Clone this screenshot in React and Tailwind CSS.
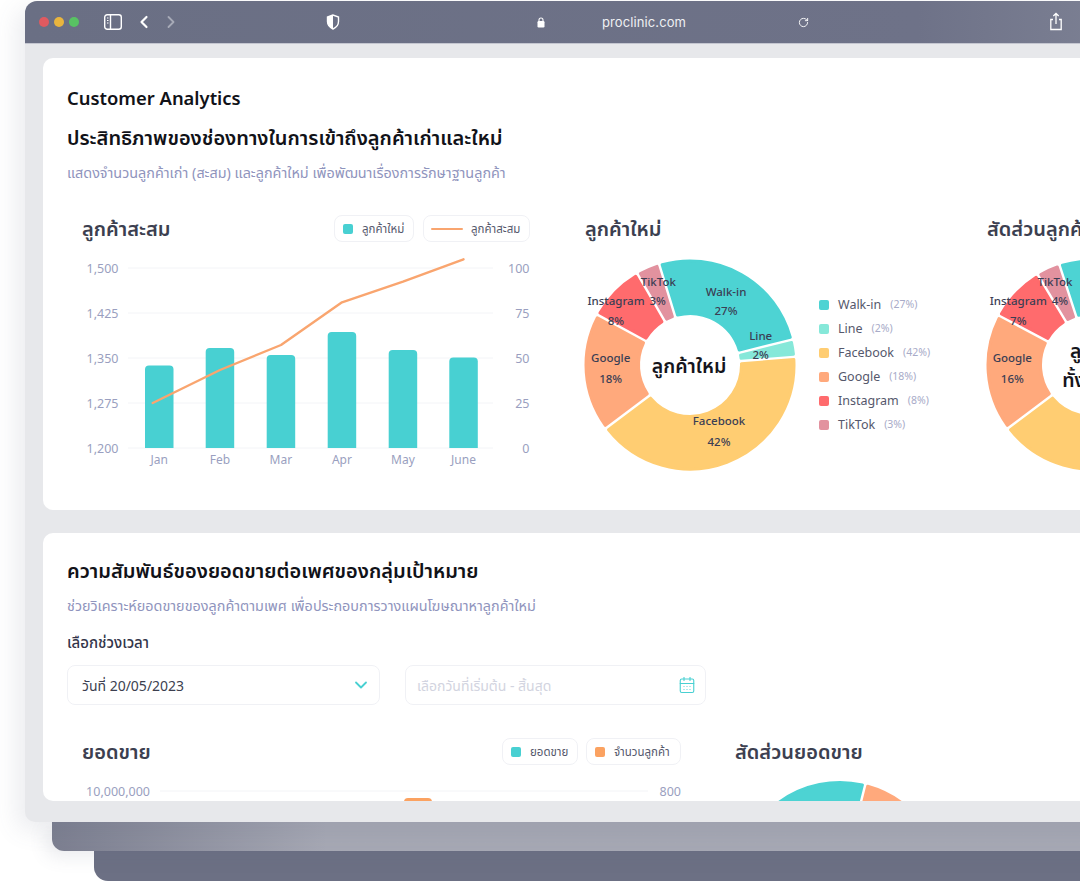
import React from "react";
import { ChevronLeft, ChevronRight, ChevronDown, RotateCw, CalendarDays } from "lucide-react";

const C = { teal: "#4dd3d3", mint: "#86e8d9", yellow: "#ffcd72", orange: "#ffa97c", red: "#ff6b6d", pink: "#e2929f" };

function pt(cx, cy, r, deg) {
  const a = ((deg - 90) * Math.PI) / 180;
  return [cx + r * Math.cos(a), cy + r * Math.sin(a)];
}

function slice(cx, cy, R, r, a0, a1) {
  const ro = R - 1.5, ri = r + 1.5, inset = 2.7;
  const dO = (inset / ro) * (180 / Math.PI), dI = (inset / ri) * (180 / Math.PI);
  const p1 = pt(cx, cy, ro, a0 + dO), p2 = pt(cx, cy, ro, a1 - dO);
  const p3 = pt(cx, cy, ri, a1 - dI), p4 = pt(cx, cy, ri, a0 + dI);
  const lo = a1 - a0 - 2 * dO > 180 ? 1 : 0, li = a1 - a0 - 2 * dI > 180 ? 1 : 0;
  return `M${p1[0]} ${p1[1]}A${ro} ${ro} 0 ${lo} 1 ${p2[0]} ${p2[1]}L${p3[0]} ${p3[1]}A${ri} ${ri} 0 ${li} 0 ${p4[0]} ${p4[1]}Z`;
}

function Donut({ slices, labels, center, width = 212, height = 212, cx = 106, cy = 106, R = 105.5, r = 50 }) {
  return (
    <svg width={width} height={height} className="block shrink-0 overflow-visible">
      {slices.map(([a0, a1, c], i) => (
        <path key={i} d={slice(cx, cy, R, r, a0, a1)} fill={c} stroke={c} strokeWidth="3" strokeLinejoin="round" />
      ))}
      {labels &&
        labels.map(([t, x, y], i) => (
          <text key={i} x={x} y={y} textAnchor="middle" dominantBaseline="central" fontSize="11.5" fontWeight="500" fill="#3b3e54">
            {t}
          </text>
        ))}
      {center &&
        center.map(([t, x, y], i) => (
          <text key={i} x={x} y={y} textAnchor="middle" dominantBaseline="central" fontSize="19.5" fontWeight="600" fill="#14151c">
            {t}
          </text>
        ))}
    </svg>
  );
}

function Pill({ children, className }) {
  return (
    <div className={"flex h-[27px] items-center rounded-[8px] border border-[#f0f1f5] bg-white text-[11.5px] text-[#55586c] " + className}>
      {children}
    </div>
  );
}

function Swatch({ color, className }) {
  return <span className={"block h-[10px] w-[10px] shrink-0 rounded-[2px] " + (className || "")} style={{ backgroundColor: color }} />;
}

function SectionTitle({ children }) {
  return <h3 className="text-[20px] leading-[27px] font-semibold whitespace-nowrap text-[#3c3f50]">{children}</h3>;
}

function BarChart() {
  const ys = [[1500, 100, 17], [1425, 75, 62], [1350, 50, 107], [1275, 25, 152], [1200, 0, 197]];
  const bars = [
    ["Jan", 78, 114.5], ["Feb", 138.7, 97], ["Mar", 199.7, 104], ["Apr", 260.7, 81], ["May", 321.7, 99], ["June", 382.3, 106.5],
  ];
  return (
    <svg width="463" height="225" className="block">
      {ys.map(([l, r, y]) => (
        <g key={l}>
          <line x1="61" x2="426" y1={y} y2={y} stroke="#f3f4f7" />
          <text x="51.5" y={y} textAnchor="end" dominantBaseline="central" fontSize="12.5" fill="#9a9fc0">{l.toLocaleString("en-US")}</text>
          <text x="462.5" y={y} textAnchor="end" dominantBaseline="central" fontSize="12.5" fill="#9a9fc0">{r}</text>
        </g>
      ))}
      {bars.map(([m, x, top]) => (
        <g key={m}>
          <path d={`M${x} 197V${top + 4}a4 4 0 0 1 4-4h20.5a4 4 0 0 1 4 4V197Z`} fill="#48d0d2" />
          <text x={x + 14.2} y="208" textAnchor="middle" dominantBaseline="central" fontSize="12" fill="#9a9fc0">{m}</text>
        </g>
      ))}
      <polyline points="85.7,152 153,119 214,94 275,51.3 336,30.7 396.5,8.3" fill="none" stroke="#f9a56f" strokeWidth="2.4" strokeLinecap="round" strokeLinejoin="round" />
    </svg>
  );
}

const legend = [
  ["Walk-in", "(27%)", C.teal],
  ["Line", "(2%)", C.mint],
  ["Facebook", "(42%)", C.yellow],
  ["Google", "(18%)", C.orange],
  ["Instagram", "(8%)", C.red],
  ["TikTok", "(3%)", C.pink],
];

const slices1 = [
  [-17, 76, C.teal], [76, 85.5, C.mint], [85.5, 233, C.yellow], [233, 298.5, C.orange], [298.5, 330, C.red], [330, 343, C.pink],
];
const labels1 = [
  ["Walk-in", 142, 32.5], ["27%", 142, 51.5], ["Line", 176.7, 76.5], ["2%", 176.7, 95.5], ["Facebook", 135, 161.5], ["42%", 135, 182],
  ["Google", 26.7, 98.5], ["18%", 26.7, 119.5], ["Instagram", 32, 41], ["8%", 32, 61.5], ["TikTok", 74.3, 22.5], ["3%", 73.7, 41.5],
];
const slices2 = [
  [-18, 76, C.teal], [76, 88, C.mint], [88, 233, C.yellow], [233, 298, C.orange], [298, 329, C.red], [329, 342, C.pink],
];
const labels2 = [
  ["Google", 26.3, 98.5], ["16%", 26.3, 119.5], ["Instagram", 32.3, 41], ["7%", 32.3, 61.5], ["TikTok", 69, 22.5], ["4%", 74, 41.5],
];

export default function App() {
  return (
    <div className="h-[881px] w-[1080px] overflow-hidden bg-white font-['Noto_Sans','Noto_Sans_Thai',Inter,sans-serif]">
      <div className="w-[1300px] pt-[1px] pl-[25px]">
        <div className="relative z-20 flex h-[821px] flex-col overflow-hidden rounded-t-[12px] rounded-bl-[10px] bg-[#e7e8eb] shadow-[-8px_8px_24px_rgba(90,95,120,0.12)]">
          {/* title bar */}
          <div className="flex h-[43px] shrink-0 items-center border-b border-[#c4c6d0] bg-gradient-to-r from-[#6a6f84] via-[#6e7288] via-[70%] to-[#8a8e9e] text-white">
            <div className="ml-[14px] flex gap-[5.5px]">
              <span className="h-[9.5px] w-[9.5px] rounded-full bg-[#df5a60]" />
              <span className="h-[9.5px] w-[9.5px] rounded-full bg-[#e9b53e]" />
              <span className="h-[9.5px] w-[9.5px] rounded-full bg-[#58c263]" />
            </div>
            <svg width="20" height="18" viewBox="0 0 20 18" className="ml-[24.5px]" fill="none" stroke="white" strokeWidth="1.4">
              <rect x="1.7" y="1.7" width="16.6" height="14.6" rx="2.5" />
              <path d="M7.5 2v14" />
              <path d="M4 5h1.5M4 7.5h1.5M4 10h1.5" strokeWidth="1.1" />
            </svg>
            <ChevronLeft size={20} strokeWidth={2.6} className="ml-[11px]" />
            <ChevronRight size={20} strokeWidth={2.2} className="ml-[7px] text-[#a7aab7]" />
            <svg width="14" height="16" viewBox="0 0 14 16" className="ml-[145px]">
              <path d="M7 1 1.5 3v4.6c0 3.6 2.5 6 5.5 7.4 3-1.4 5.5-3.8 5.5-7.4V3Z" fill="none" stroke="white" strokeWidth="1.4" />
              <path d="M7 1 1.5 3v4.6c0 3.6 2.5 6 5.5 7.4Z" fill="white" />
            </svg>
            <svg width="8" height="11" viewBox="0 0 8 11" className="ml-[197px]" fill="white">
              <rect x="0.5" y="4" width="7" height="6.5" rx="1.2" />
              <path d="M2 4.5V3a2 2 0 0 1 4 0v1.500" fill="none" stroke="white" strokeWidth="1.1" />
            </svg>
            <span className="ml-[57px] font-['Inter',sans-serif] text-[13px] leading-[20px] tracking-[0.1px] text-[#eef0f3]">proclinic.com</span>
            <RotateCw size={11} strokeWidth={2} className="ml-[112px]" />
            <svg width="14" height="19" viewBox="0 0 14 19" className="-mt-[1px] ml-[240px]" fill="none" stroke="white" strokeWidth="1.3">
              <path d="M4 7.5H1.800v10h10.400v-10H10" />
              <path d="M7 12V1.500M4.300 4 7 1.500 9.700 4" />
            </svg>
          </div>

          {/* body */}
          <div className="flex h-0 flex-1 flex-col gap-[23px] overflow-hidden pt-[14px] pb-[21px] pl-[18px]">
            {/* card 1 */}
            <section className="h-[452px] shrink-0 rounded-[10px] bg-white pt-[26px] pl-[24px]">
              <h1 className="text-[18.4px] leading-[27px] font-semibold text-[#111218]">Customer Analytics</h1>
              <h2 className="mt-[12px] text-[20px] leading-[30px] font-semibold text-[#111218]">ประสิทธิภาพของช่องทางในการเข้าถึงลูกค้าเก่าและใหม่</h2>
              <p className="mt-[9px] text-[14.4px] leading-[21px] text-[#8f94bd]">แสดงจำนวนลูกค้าเก่า (สะสม) และลูกค้าใหม่ เพื่อพัฒนาเรื่องการรักษาฐานลูกค้า</p>
              <div className="mt-[32px] flex gap-[55px]">
                <div className="w-[463px] shrink-0">
                  <div className="flex h-[27px] items-center justify-between pl-[15px]">
                    <SectionTitle>ลูกค้าสะสม</SectionTitle>
                    <div className="flex gap-[9px]">
                      <Pill className="w-[80px] pl-[8px]">
                        <Swatch color="#48d0d2" />
                        <span className="ml-[9px] whitespace-nowrap">ลูกค้าใหม่</span>
                      </Pill>
                      <Pill className="w-[107px] pl-[7px]">
                        <span className="block h-[2px] w-[32px] shrink-0 rounded bg-[#f9a56f]" />
                        <span className="ml-[8px] whitespace-nowrap">ลูกค้าสะสม</span>
                      </Pill>
                    </div>
                  </div>
                  <div className="mt-[9px]">
                    <BarChart />
                  </div>
                </div>

                <div className="w-[347px] shrink-0">
                  <SectionTitle>ลูกค้าใหม่</SectionTitle>
                  <div className="mt-[17px] -ml-[1px] flex items-center">
                    <Donut slices={slices1} labels={labels1} center={[["ลูกค้าใหม่", 105, 106]]} />
                    <ul className="ml-[23px]">
                      {legend.map(([n, p, c]) => (
                        <li key={n} className="flex h-[24px] items-center">
                          <Swatch color={c} />
                          <span className="ml-[9px] text-[12.5px] text-[#55586c]">{n}</span>
                          <span className="ml-[9px] text-[10.5px] text-[#a8abc8]">{p}</span>
                        </li>
                      ))}
                    </ul>
                  </div>
                </div>

                <div className="w-[300px] shrink-0">
                  <SectionTitle>สัดส่วนลูกค้าทั้งหมด</SectionTitle>
                  <div className="mt-[17px] -ml-[1px]">
                    <Donut slices={slices2} labels={labels2} center={[["ลูกค้า", 106, 91], ["ทั้งหมด", 106, 120]]} />
                  </div>
                </div>
              </div>
            </section>

            {/* card 2 */}
            <section className="h-0 flex-1 overflow-hidden rounded-[10px] bg-white pt-[23px] pl-[24px]">
              <h2 className="text-[20px] leading-[30px] font-semibold text-[#111218]">ความสัมพันธ์ของยอดขายต่อเพศของกลุ่มเป้าหมาย</h2>
              <p className="mt-[10px] text-[14.4px] leading-[20px] text-[#8f94bd]">ช่วยวิเคราะห์ยอดขายของลูกค้าตามเพศ เพื่อประกอบการวางแผนโฆษณาหาลูกค้าใหม่</p>
              <p className="mt-[16px] text-[15px] leading-[21px] font-medium text-[#33354a]">เลือกช่วงเวลา</p>
              <div className="mt-[12px] flex gap-[25px]">
                <div className="flex h-[40px] w-[313px] items-center justify-between rounded-[8px] border border-[#f0f1f5] pr-[8px] pl-[14px] text-[14px] text-[#3c3f50]">
                  <span>วันที่ 20/05/2023</span>
                  <ChevronDown size={20} strokeWidth={2.2} className="text-[#48d0d2]" />
                </div>
                <div className="flex h-[40px] w-[301px] items-center justify-between rounded-[8px] border border-[#f0f1f5] pr-[9px] pl-[11px] text-[14px] text-[#d2d4e0]">
                  <span>เลือกวันที่เริ่มต้น - สิ้นสุด</span>
                  <CalendarDays size={18} strokeWidth={1.5} className="text-[#48d0d2]" />
                </div>
              </div>
              <div className="mt-[33px] flex gap-[54px]">
                <div className="w-[614px] shrink-0">
                  <div className="flex h-[27px] items-center justify-between pl-[15px]">
                    <SectionTitle>ยอดขาย</SectionTitle>
                    <div className="flex gap-[8px]">
                      <Pill className="w-[76px] pl-[8px]">
                        <Swatch color="#48d0d2" />
                        <span className="ml-[9px] whitespace-nowrap">ยอดขาย</span>
                      </Pill>
                      <Pill className="w-[95px] pl-[8px]">
                        <Swatch color="#fba261" />
                        <span className="ml-[9px] whitespace-nowrap">จำนวนลูกค้า</span>
                      </Pill>
                    </div>
                  </div>
                  <svg width="614" height="100" className="mt-[7px] block">
                    <text x="83" y="19" textAnchor="end" dominantBaseline="central" fontSize="12.5" fill="#9a9fc0">10,000,000</text>
                    <line x1="93" x2="581" y1="19" y2="19" stroke="#f3f4f7" />
                    <text x="614" y="19" textAnchor="end" dominantBaseline="central" fontSize="12.5" fill="#9a9fc0">800</text>
                    <path d="M337 60V30a4 4 0 0 1 4-4h20a4 4 0 0 1 4 4V60Z" fill="#fba261" />
                  </svg>
                </div>
                <div className="w-[300px] shrink-0">
                  <SectionTitle>สัดส่วนยอดขาย</SectionTitle>
                  <div className="mt-[16px]">
                    <Donut
                      slices={[[-90, 14, C.teal], [14, 70, C.orange], [70, 270, C.yellow]]}
                      cx={105}
                      cy={105}
                      R={105}
                      r={50}
                    />
                  </div>
                </div>
              </div>
            </section>
          </div>
        </div>

        <div className="relative z-10 ml-[27px] h-[29px] rounded-bl-[12px] bg-gradient-to-r from-[#7c7f90] via-[#a6a8b4] via-[22%] to-[#a6a8b4] shadow-[-6px_6px_18px_rgba(90,95,120,0.12)]" />
        <div className="ml-[69px] h-[30px] rounded-bl-[14px] bg-[#6c7084]" />
      </div>
    </div>
  );
}
